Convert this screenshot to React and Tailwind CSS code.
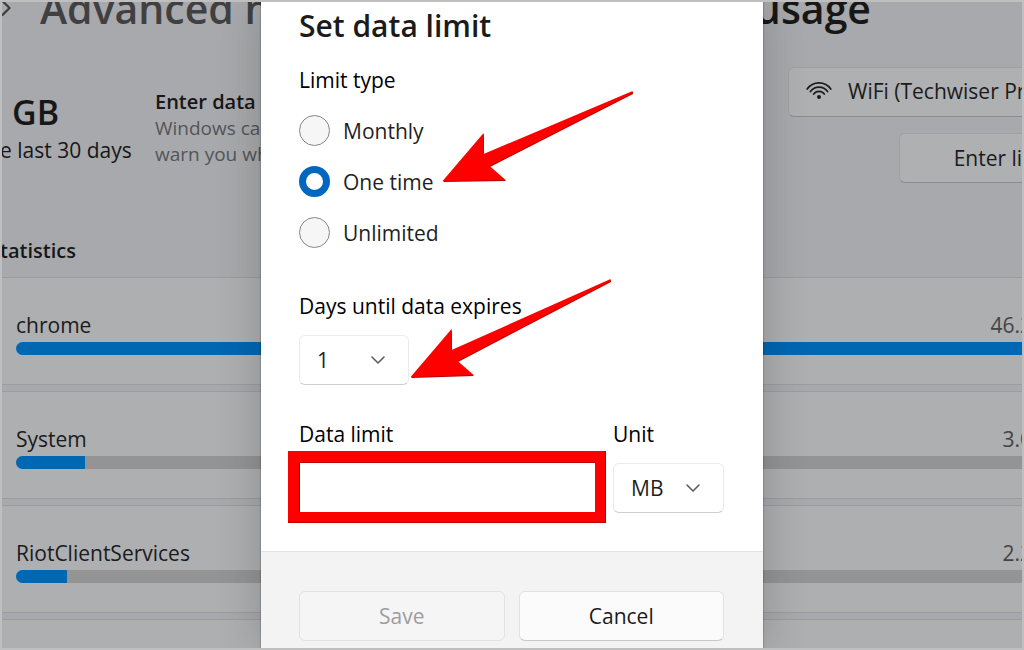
import { useState } from 'react';
import { ChevronDown, ChevronRight } from 'lucide-react';

const APPS = [
  { name: 'chrome', usage: '46.2', share: 100 },
  { name: 'System', usage: '3.0', share: 6.8 },
  { name: 'RiotClientServices', usage: '2.2', share: 5 },
];

const LIMIT_TYPES = ['Monthly', 'One time', 'Unlimited'];

function WifiIcon() {
  return (
    <svg className="w-[26px] h-5 flex-shrink-0 -mt-1" viewBox="0 0 26 20" fill="none" stroke="currentColor" strokeWidth="1.7" strokeLinecap="round">
      <path d="M1.2 9A14.4 14.4 0 0 1 24.8 9" />
      <path d="M4.4 11.6A10.6 10.6 0 0 1 21.6 11.6" />
      <path d="M7.7 14.1A6.6 6.6 0 0 1 18.3 14.1" />
      <circle cx="13" cy="17" r="2" fill="currentColor" stroke="none" />
    </svg>
  );
}

/** Red pointer with a darker lower edge */
function Arrow({ className, points }) {
  return (
    <svg className={`absolute pointer-events-none overflow-visible w-[200px] h-[98px] ${className}`} viewBox="0 0 200 98">
      <polygon points={points} fill="#b80000" />
      <polygon points={points} fill="#ff0000" transform="translate(-0.4 -1)" />
    </svg>
  );
}

/** Dropdown with its own chevron */
function Dropdown({ id, value, options, onChange, className }) {
  return (
    <div className={`relative ${className}`}>
      <select
        id={id}
        value={value}
        onChange={(e) => onChange(e.target.value)}
        className="appearance-none w-full h-[50px] pt-0.5 pl-[17px] pr-10 rounded-md bg-white border border-[#ebebeb] border-b-[#cfcfcf] text-[#1f1f1f]"
      >
        {options.map((o) => (
          <option key={o}>{o}</option>
        ))}
      </select>
      <ChevronDown className="absolute right-[19px] top-[13px] w-6 h-6 text-[#5c5c5c] pointer-events-none" strokeWidth={1.6} />
    </div>
  );
}

function UsageCard({ app }) {
  return (
    <li className="h-[108px] flex-shrink-0 border-y border-[#9b9c9f] bg-[#aeafb1] pl-4 pt-[33px]">
      {app && (
        <>
          <div className="flex justify-between leading-7">
            <span className="text-[#1b1b1c]">{app.name}</span>
            <span className="text-[#444446]">{app.usage}</span>
          </div>
          <div className="mt-[3px] h-[13px] rounded-l-full bg-[#949494] overflow-hidden">
            <div className="h-full bg-[#0067b3]" style={{ width: `${app.share}%` }} />
          </div>
        </>
      )}
    </li>
  );
}

function UsagePage() {
  return (
    <main className="flex flex-col h-full bg-[#a8a9ac] text-[#171718] pt-0.5">
      <h1 className="flex items-center justify-between h-3 flex-shrink-0 pr-[153px] text-[41px] leading-3 font-semibold whitespace-nowrap">
        <span className="flex items-center text-[#404042]">
          <ChevronRight className="w-7 h-7 -ml-2 mr-5" strokeWidth={2} />
          Advanced n
        </span>
        <span>usage</span>
      </h1>

      <section className="flex mt-[53px] h-[170px] flex-shrink-0 whitespace-nowrap">
        <div className="w-[155px] pt-[21px]">
          <div className="pl-3 text-[34px] leading-[48px] font-semibold">GB</div>
          <div className="leading-7">e last 30 days</div>
        </div>
        <div className="flex-1 pt-[22px] text-[19px] leading-[26px]">
          <h2 className="text-[20px] font-semibold">Enter data</h2>
          <p className="text-[#545557]">
            Windows can
            <br />
            warn you when
          </p>
        </div>
        <div className="flex flex-col items-end gap-4 -mr-[85px]">
          <button className="flex items-center gap-4 w-[321px] h-[50px] px-[17px] rounded-md bg-[#afb0b2] border border-[#9fa0a2] border-b-[#8b8c8e] text-[#1b1b1c]">
            <WifiIcon />
            WiFi (Techwiser Pr
          </button>
          <button className="w-[210px] h-[50px] pt-0.5 rounded-md bg-[#afb0b2] border border-[#9fa0a2] border-b-[#8b8c8e] text-[#1b1b1c]">
            Enter limit
          </button>
        </div>
      </section>

      <h2 className="text-[20px] leading-7 font-semibold">tatistics</h2>
      <ul className="flex flex-col gap-1.5 mt-3 -mr-2">
        {APPS.map((app) => (
          <UsageCard key={app.name} app={app} />
        ))}
        <UsageCard />
      </ul>
    </main>
  );
}

function LimitDialog() {
  const [limitType, setLimitType] = useState('One time');
  const [days, setDays] = useState('1');
  const [limit, setLimit] = useState('');
  const [unit, setUnit] = useState('MB');

  return (
    <div
      role="dialog"
      aria-labelledby="dialog-title"
      className="absolute inset-y-0 left-1/2 -translate-x-1/2 w-[502px] pt-0.5 flex flex-col bg-white text-black shadow-[0_0_44px_rgba(0,0,0,0.2),0_0_2px_rgba(0,0,0,0.4)]"
    >
      <div className="pl-[38px] pr-[39px] pt-1 pb-[38px]">
        <h2 id="dialog-title" className="text-[30px] leading-10 font-semibold text-[#1b1b1b]">Set data limit</h2>

        <fieldset className="mt-5">
          <legend className="leading-7">Limit type</legend>
          <div className="flex flex-col items-start gap-5 mt-[21px]">
            {LIMIT_TYPES.map((type) => (
              <label key={type} className="flex items-center gap-[13px] h-[31px] text-[#1f1f1f]">
                <input
                  type="radio"
                  name="limit-type"
                  checked={limitType === type}
                  onChange={() => setLimitType(type)}
                  className="appearance-none w-[31px] h-[31px] rounded-full border border-[#868686] bg-[#f6f6f6] checked:border-[7px] checked:border-[#0067c0] checked:bg-white"
                />
                <span className="pt-0.5">{type}</span>
              </label>
            ))}
          </div>
        </fieldset>

        <label htmlFor="days" className="block mt-11 leading-7">Days until data expires</label>
        <Dropdown id="days" value={days} options={['1', '7', '30']} onChange={setDays} className="mt-[15px] w-[110px]" />

        <div className="flex gap-[18px] mt-[35px]">
          <div className="flex-1 min-w-0">
            <label htmlFor="limit" className="block leading-7">Data limit</label>
            <input
              id="limit"
              value={limit}
              onChange={(e) => setLimit(e.target.value)}
              className="block mt-[14px] w-full h-[50px] px-3 bg-white outline-none shadow-[inset_1px_1px_0_#c00000,0_0_0_10px_#ff0000,-1px_-1px_0_10px_#ff0000,0_0_0_11px_#c80000]"
            />
          </div>
          <div className="w-[111px]">
            <label htmlFor="unit" className="block leading-7">Unit</label>
            <Dropdown id="unit" value={unit} options={['MB', 'GB']} onChange={setUnit} className="mt-[15px]" />
          </div>
        </div>
      </div>

      <div className="flex-1 flex gap-[14px] pl-[38px] pr-[39px] pt-[39px] bg-[#f3f3f3] border-t border-[#e3e3e3]">
        <button disabled className="flex-1 h-[50px] pt-0.5 rounded-md bg-[#f5f5f5] border border-[#e3e3e3] text-[#9d9d9d]">Save</button>
        <button className="flex-1 h-[50px] pt-0.5 rounded-md bg-[#fbfbfb] border border-[#e1e1e1] border-b-[#c8c8c8] text-[#1b1b1b]">Cancel</button>
      </div>

      <Arrow className="left-[182px] top-[92px]" points="0,90 41,42 41,63 190,0 190,2 47,75 63,89" />
      <Arrow className="left-[150px] top-[280px]" points="0,98 41,50 41,71 200,0 200,2 47,82 63,96" />
    </div>
  );
}

export default function App() {
  return (
    <div className="relative h-screen overflow-hidden text-[21px] font-['Open_Sans','Noto_Sans',sans-serif]">
      <UsagePage />
      <LimitDialog />
      <div className="absolute inset-0 border-2 border-[#bfbfbf] pointer-events-none" />
    </div>
  );
}
